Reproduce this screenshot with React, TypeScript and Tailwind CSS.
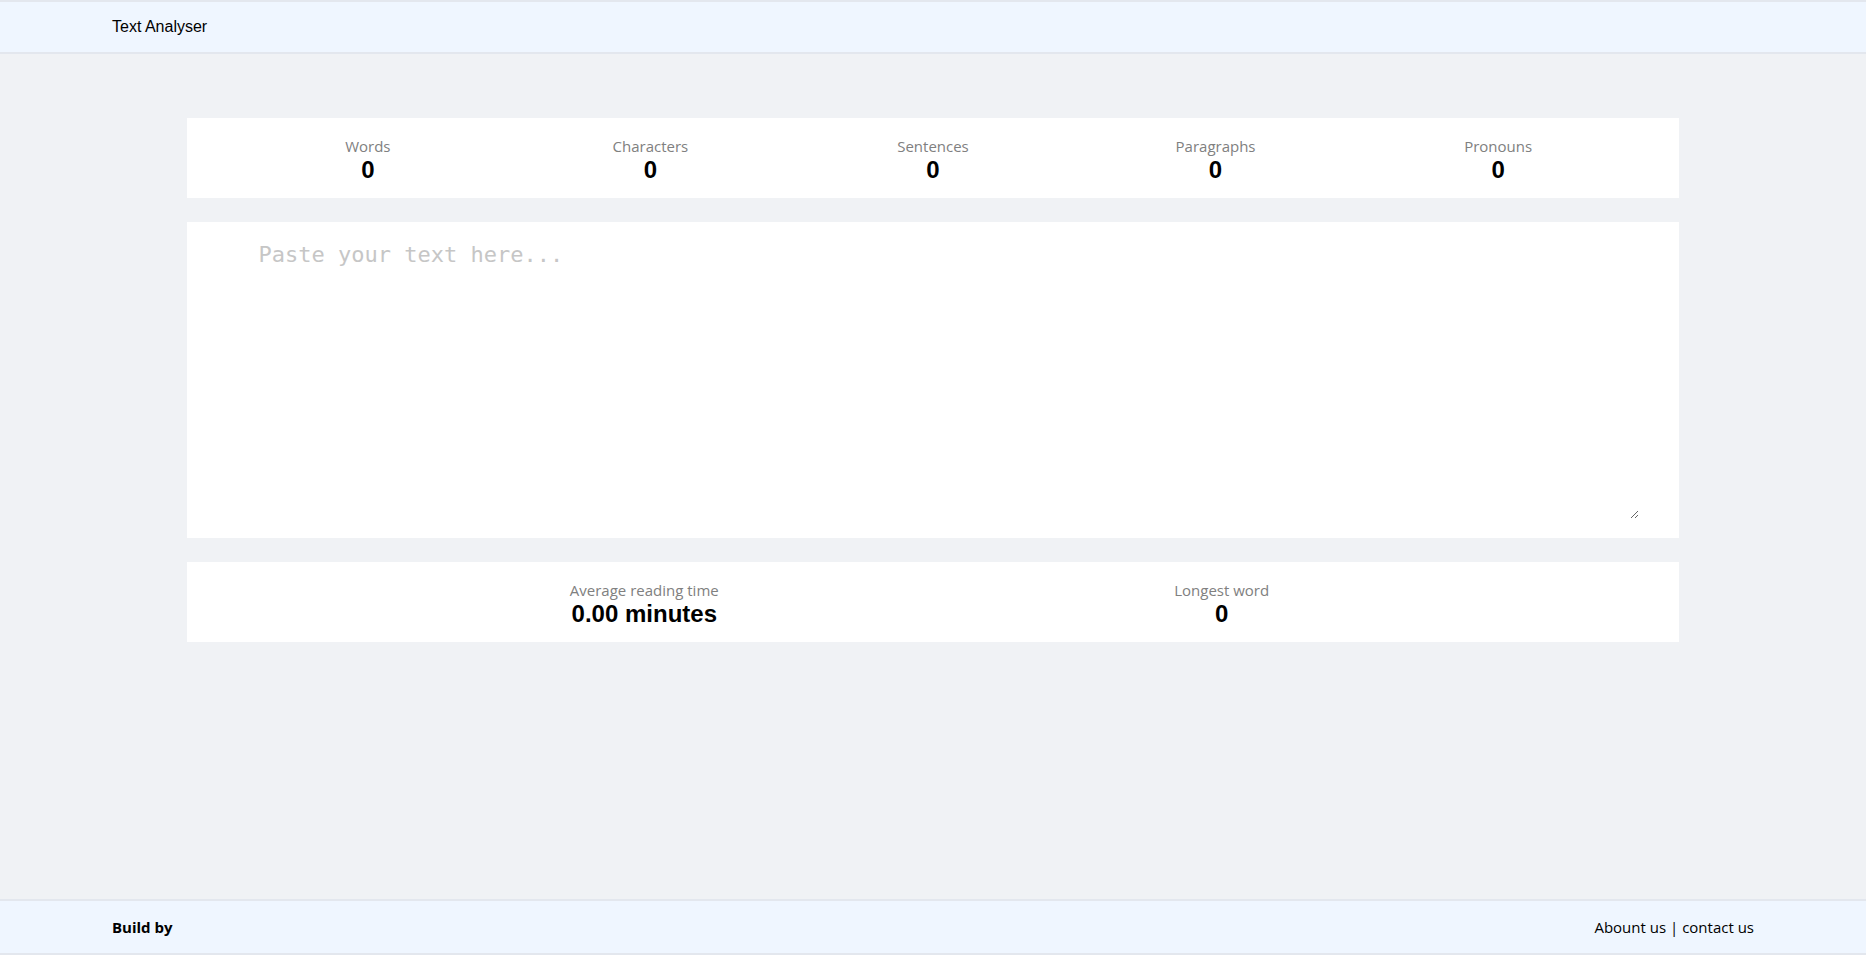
import React, { useState } from 'react';

const stats = ['Words', 'Characters', 'Sentences', 'Paragraphs', 'Pronouns'];

const labelFont = { fontFamily: '"Segoe UI", "Open Sans", "Noto Sans", sans-serif' };

const App: React.FC = () => {
  const [text, setText] = useState('');

  return (
    <div className="min-h-screen flex flex-col bg-[#f0f2f5]" style={{ fontFamily: '"Liberation Sans", Arial, sans-serif' }}>
      <header className="h-[54px] bg-[#eff6ff] border-t-2 border-b-2 border-[#e3e7ee] flex items-center px-[112px]">
        <span className="text-base text-black">Text Analyser</span>
      </header>

      <main className="flex-1 w-4/5 mx-auto mt-16 flex flex-col gap-6">
        <section className="bg-white px-10 py-4 grid grid-cols-5">
          {stats.map((s) => (
            <div key={s} className="flex flex-col items-center">
              <span className="text-[15px] leading-6 text-[#808080]" style={labelFont}>{s}</span>
              <span className="text-2xl leading-none font-bold text-black">0</span>
            </div>
          ))}
        </section>

        <section className="bg-white px-10 pt-3 pb-[19px]">
          <textarea
            value={text}
            onChange={(e) => setText(e.target.value)}
            placeholder="Paste your text here..."
            className="block w-full h-[285px] pl-8 pr-4 pt-[4px] outline-none text-[22px] leading-normal placeholder:text-[#c6c6c6] text-black"
            style={{ fontFamily: '"DejaVu Sans Mono", "Liberation Mono", monospace' }}
          />
        </section>

        <section className="bg-white px-[169px] py-4 grid grid-cols-2">
          <div className="flex flex-col items-center">
            <span className="text-[15px] leading-6 text-[#808080]" style={labelFont}>Average reading time</span>
            <span className="text-2xl leading-none font-bold text-black">0.00 minutes</span>
          </div>
          <div className="flex flex-col items-center">
            <span className="text-[15px] leading-6 text-[#808080]" style={labelFont}>Longest word</span>
            <span className="text-2xl leading-none font-bold text-black">0</span>
          </div>
        </section>
      </main>

      <footer className="h-[56px] bg-[#eff6ff] border-t-2 border-b-2 border-[#e3e7ee] flex items-center justify-between px-[112px]" style={labelFont}>
        <span className="text-[15px] font-bold text-black">Build by</span>
        <span className="text-[15px] text-black">Abount us | contact us</span>
      </footer>
    </div>
  );
};

export default App;
